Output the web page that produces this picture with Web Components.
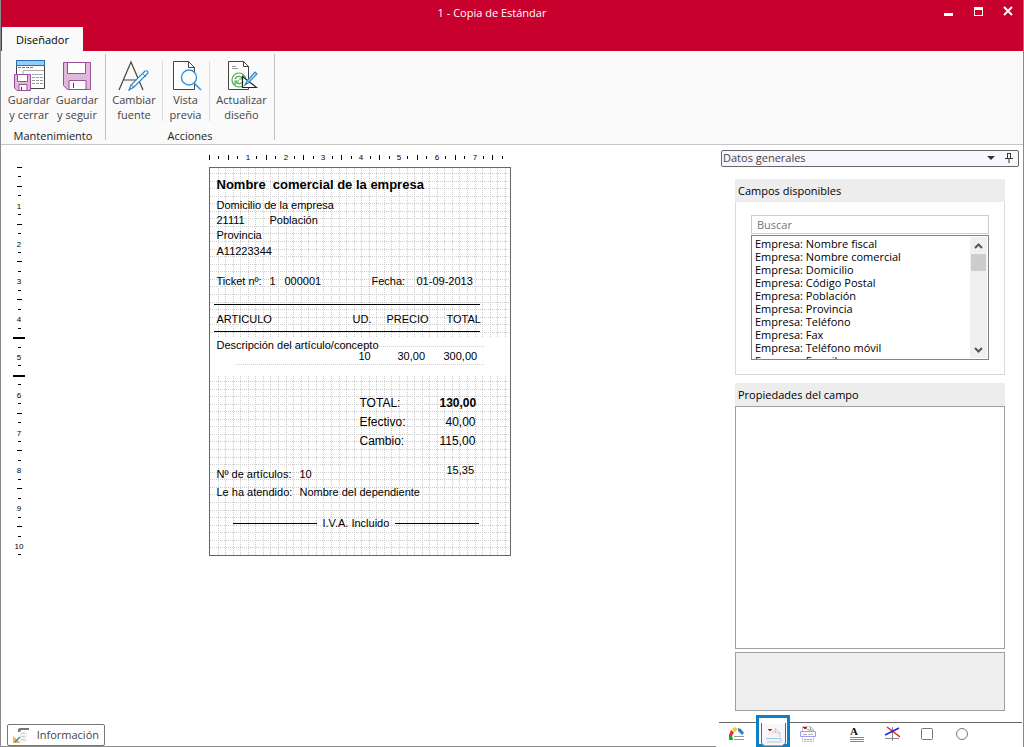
<!DOCTYPE html>
<html lang="es">
<head>
<meta charset="utf-8">
<title>1 - Copia de Estándar</title>
<style>
  html, body { margin: 0; height: 100%; }
  body { font: 11px/15px "Open Sans", "Noto Sans", sans-serif; color: #1e1e1e; background: #fff; }
</style>
</head>
<body>
<designer-window></designer-window>

<template id="tpl-window">
  <style>
    :host { display: flex; flex-direction: column; min-height: 100vh; box-sizing: border-box; border-left: 1px solid #8a8a8a; border-right: 1px solid #8a8a8a; background: #fff; }
    main { flex: 1; display: grid; grid-template-columns: minmax(0, 1fr) 305px; }
    .left { display: flex; flex-direction: column; border-bottom: 1px solid #8a8a8a; margin-right: 2px; }
    design-surface { flex: 1; }
  </style>
  <title-bar>1 - Copia de Estándar</title-bar>
  <ribbon-bar></ribbon-bar>
  <main>
    <div class="left">
      <design-surface></design-surface>
      <status-strip></status-strip>
    </div>
    <side-panel></side-panel>
  </main>
</template>

<template id="tpl-title">
  <style>
    :host { display: grid; grid-template-columns: 1fr auto 1fr; height: 51px; background: #c8002d; color: #fff; }
    .name { grid-column: 2; padding-top: 5px; margin-right: 40px; }
    .buttons { grid-column: 3; display: flex; justify-content: flex-end; align-items: flex-start; }
    .tab { grid-column: 1; grid-row: 1; align-self: end; justify-self: start; height: 24px; width: 81px; border: 0; padding: 0; margin-left: 1px; background: #fafafa; font: inherit; color: #000; }
    .buttons button { border: 0; background: none; padding: 0; width: 30px; height: 20px; }
    svg { display: block; margin: 4px auto 0; }
  </style>
  <button class="tab" type="button">Diseñador</button>
  <div class="name"><slot></slot></div>
  <div class="buttons">
    <button type="button" aria-label="Minimizar"><svg width="12" height="12"><path d="M2 7h9v3H2z" fill="#fff"/></svg></button>
    <button type="button" aria-label="Maximizar"><svg width="12" height="12"><path d="M2 1h9v9H2zM3 4v5h7V4z" fill="#fff" fill-rule="evenodd"/></svg></button>
    <button type="button" aria-label="Cerrar"><svg width="12" height="12"><path d="M2 1l8 8M10 1l-8 8" stroke="#fff" stroke-width="2"/></svg></button>
  </div>
</template>

<template id="tpl-ribbon">
  <style>
    :host { display: flex; height: 93px; background: #fafafa; border-bottom: 1px solid #c6c6c6; }
    ribbon-group:first-of-type { width: 105px; }
    ribbon-group:last-of-type { width: 169px; }
    i { width: 1px; margin-top: 6px; height: 60px; background: #dcdcdc; }
  </style>
  <ribbon-group label="Mantenimiento">
    <ribbon-button line1="Guardar" line2="y cerrar" size="48"><svg width="32" height="32" fill="none">
      <path d="M3.500 1.500h28v28h-28z" fill="#fff" stroke="#444"/><path d="M3.500 1.500h28v5h-28z" fill="#9acbf0" stroke="#1f72b8"/>
      <path d="M5 8.500h3m1 0h3m1 0h3m1 0h3" stroke="#777"/><path d="M10 11.500h21M10 12v4M19 15.500h11" stroke="#aaa"/><path d="M19 18.500h3m1 0h3m1 0h3M19 21.500h3m1 0h3m1 0h3M19 24.500h3m1 0h3m1 0h3" stroke="#999"/>
      <path d="M1.500 15.500h16v16H4l-2.500-2.500z" fill="#deb9dc" stroke="#9b4f96"/><path d="M4.500 15.500h10v7h-10zM6 31v-5.500h8V31" fill="#fff" stroke="#9b4f96"/><path d="M8.500 28v3" stroke="#444"/></svg></ribbon-button>
    <ribbon-button line1="Guardar" line2="y seguir" size="48"><svg width="32" height="32" fill="none">
      <path d="M2.500 3.500h27v27H6.500l-4-4z" fill="#deb9dc" stroke="#9b4f96"/><path d="M6.500 3.500h18v11h-18zM8 30v-8.500h17V30" fill="#fff" stroke="#9b4f96"/><path d="M12.500 24v5" stroke="#444"/></svg></ribbon-button>
  </ribbon-group>
  <ribbon-group label="Acciones">
    <ribbon-button line1="Cambiar" line2="fuente" size="55"><svg width="32" height="32" fill="none">
      <path d="M1 31L13 3L25 31M6 21h14" stroke="#444" stroke-width="1.200"/><path d="M11 31l2-5L27 12q3-1 3 2L16 28z" fill="#fff" stroke="#2d88cb" stroke-width="1.200"/><path d="M24 14l4 4M13 26l3 2" stroke="#2d88cb"/></svg></ribbon-button><i></i>
    <ribbon-button line1="Vista" line2="previa" size="46"><svg width="32" height="32" fill="none">
      <path d="M3.500 2.500h15l6 6v22h-21z" fill="#fff" stroke="#444"/><path d="M18.500 2.500v6h6z" stroke="#444"/><circle cx="19" cy="18.500" r="7.500" fill="#fff" stroke="#3595d8" stroke-width="1.400"/><path d="M24 24l7 7" stroke="#3595d8" stroke-width="1.600"/></svg></ribbon-button><i></i>
    <ribbon-button line1="Actualizar" line2="diseño" size="64"><svg width="32" height="32" fill="none">
      <path d="M2.500 2.500h15l5 5v23h-20z" fill="#fff" stroke="#444"/><path d="M17.500 2.500v5h5z" stroke="#444"/><path d="M6 7.500h4M6 9.500h6" stroke="#999"/>
      <circle cx="13" cy="21" r="8" fill="#fff"/><circle cx="13" cy="21" r="7" stroke="#45ad43" stroke-width="1.200"/><path d="M9 20a4 4 0 0 1 7-1M17 22a4 4 0 0 1-7 1" stroke="#45ad43" stroke-width="1.400"/><path d="M17 16v4h-4M9 26v-4h4" stroke="#45ad43" stroke-width="1.200"/>
      <path d="M16.500 17.500v11h14z" fill="#fff" stroke="#222" stroke-width="1.200"/><path d="M19 26l2-4 8-9 2 2-9 9z" fill="#bfe0f7" stroke="#2d88cb" stroke-width="1.200"/></svg></ribbon-button>
  </ribbon-group>
</template>

<template id="tpl-group">
  <style>
    :host { display: flex; flex-direction: column; box-sizing: border-box; border-right: 1px solid #c6c6c6; border-image: linear-gradient(transparent 4px, #c0c0c0 4px, #c0c0c0 88px, transparent 88px) 1; }
    .row { display: flex; justify-content: center; padding-top: 4px; height: 77px; box-sizing: border-box; }
    .label { text-align: center; color: #222; }
  </style>
  <div class="row"><slot></slot></div>
  <div class="label"></div>
</template>

<template id="tpl-rbutton">
  <style>
    :host { display: block; }
    button { width: 100%; border: 0; padding: 4px 0 0; background: none; font: inherit; color: #444; display: flex; flex-direction: column; align-items: center; white-space: nowrap; }
    ::slotted(svg) { display: block; margin-bottom: 1px; }
  </style>
  <button type="button"><slot></slot><span class="a"></span><span class="b"></span></button>
</template>

<template id="tpl-surface">
  <style>
    :host { display: grid; grid-template-columns: 32px 1fr 30px; grid-template-rows: 22px 1fr; align-items: start; }
    .h { grid-column: 2; justify-self: center; }
    .v { grid-column: 1; grid-row: 2; margin-top: -5px; }
    ticket-page { grid-column: 2; grid-row: 2; justify-self: center; }
  </style>
  <ruler-scale class="h" axis="x"></ruler-scale>
  <ruler-scale class="v" axis="y"></ruler-scale>
  <ticket-page></ticket-page>
</template>

<template id="tpl-page">
  <style>
    :host { display: block; position: relative; box-sizing: border-box; width: 302px; height: 389px; border: 1px solid #666; background: #fff; color: #000; font-family: "Liberation Sans", Arial, sans-serif; }
    svg, span { position: absolute; }
    svg { inset: 0; }
    span { white-space: pre; }
    .t { font-size: 13px; font-weight: bold; }
    .m { font-size: 12px; }
    .b { font-weight: bold; }
  </style>
  <svg width="300" height="387" aria-hidden="true"></svg>
</template>

<template id="tpl-status">
  <style>
    :host { display: flex; padding: 0 6px; }
    button { display: flex; align-items: center; gap: 8px; height: 22px; width: 98px; padding: 0 5px 1px; border: 1px solid #777; border-radius: 2px; background: #fff; font: inherit; color: #444; }
  </style>
  <button type="button"><svg width="16" height="16" fill="none"><path d="M5 2l2-1h9v2H8L7 5v10h7V5" fill="#f3f3f3" stroke="none"/><path d="M5 4V2l2-1h9v2H8L7 5H5z" fill="#777"/><path d="M8 6.500h4M8 9.500h4M8 12.500h4" stroke="#ccc"/><path d="M0 9l8 7H0z" fill="#f0b653"/><path d="M2 15l5-5" stroke="#3689c7" stroke-width="1.500"/></svg>Información</button>
</template>

<template id="tpl-side">
  <style>
    :host { display: flex; flex-direction: column; }
    .dock { margin: 5px 4px 0 3px; box-sizing: border-box; height: 17px; border: 1px solid #666; border-radius: 2px; background: #f7f6fc; display: flex; align-items: flex-start; color: #444; padding-left: 1px; }
    .dock span { flex: 1; line-height: 14px; }
    .dock button { border: 0; padding: 0; background: none; width: 18px; height: 13px; display: flex; align-items: center; justify-content: center; }
    section { margin: 12px 18px 0 17px; display: flex; flex-direction: column; }
    section + section { margin-top: 8px; flex: 1; }
    h2 { margin: 0; font: inherit; line-height: 23px; height: 23px; background: #ededed; padding-left: 3px; color: #000; }
    .body { border: 1px solid #d9d9d9; border-top: 0; padding: 13px 15px 14px; display: flex; flex-direction: column; gap: 1px; }
    input { box-sizing: border-box; width: 100%; height: 19px; border: 1px solid #ccc; border-radius: 0; padding: 0 5px 1px; font: inherit; outline: 0; background: #fff; }
    input::placeholder { color: #767676; opacity: 1; }
    .list { display: flex; box-sizing: border-box; height: 125px; border: 1px solid #7d838c; padding: 0 1px; }
    select { flex: 1; min-width: 0; border: 0; padding: 0; margin: 0; background: #fff; font: inherit; color: #000; scrollbar-width: none; overflow: hidden; outline: 0; border-radius: 0; height: 123px; }
    option { padding: 0 2px; height: 13px; min-height: 13px; line-height: 13px; font-size: 11px; }
    .bar { width: 17px; margin: 1px 0; background: #f0f0f0; display: flex; flex-direction: column; }
    .bar button { border: 0; padding: 0; height: 17px; background: none; display: flex; align-items: center; justify-content: center; }
    .thumb { height: 17px; background: #cdcdcd; margin: 0 1px; }
    .space { flex: 1; }
    .props { flex: 1; border: 1px solid #a0a0a0; }
    .desc { height: 57px; margin: 3px 0 11px; border: 1px solid #a0a0a0; background: #efefef; }
    nav { display: flex; border-top: 1px solid #666; height: 24px; margin: 0 1px; }
    nav button { border: 0; padding: 0 0 2px; background: none; width: 35px; height: 24px; box-sizing: border-box; display: flex; justify-content: center; align-items: center; }
    nav button.on { position: relative; width: 36px; padding: 0; }
    nav .on::before { content: ""; position: absolute; left: 2px; right: 0; top: -8px; height: 26px; border: 3px solid #0b80c4; background: #fff; }
    nav .on svg { position: relative; margin-left: 2px; }
    nav .gap { margin-left: 14px; }
  </style>
  <div class="dock"><span>Datos generales</span>
    <button type="button" aria-label="Menú"><svg width="8" height="4"><path d="M0 0h8L4 4z" fill="#333"/></svg></button>
    <button type="button" aria-label="Fijar panel"><svg width="8" height="11" fill="none"><path d="M2.500 1v5M2 1.500h4M0 6.500h8M4 7v4" stroke="#333"/><path d="M5 1h1v5H5z" fill="#333"/></svg></button>
  </div>
  <section>
    <h2>Campos disponibles</h2>
    <div class="body">
      <input type="text" placeholder="Buscar" aria-label="Buscar">
      <div class="list">
        <select size="9" aria-label="Campos disponibles">
          <option>Empresa: Nombre fiscal</option><option>Empresa: Nombre comercial</option><option>Empresa: Domicilio</option><option>Empresa: Código Postal</option><option>Empresa: Población</option><option>Empresa: Provincia</option><option>Empresa: Teléfono</option><option>Empresa: Fax</option><option>Empresa: Teléfono móvil</option><option>Empresa: E-mail</option>
        </select>
        <div class="bar">
          <button type="button" aria-label="Subir"><svg width="9" height="6" fill="none"><path d="M1 5l3.500-3.500L8 5" stroke="#555" stroke-width="2"/></svg></button>
          <div class="thumb"></div><div class="space"></div>
          <button type="button" aria-label="Bajar"><svg width="9" height="6" fill="none"><path d="M1 1l3.500 3.500L8 1" stroke="#555" stroke-width="2"/></svg></button>
        </div>
      </div>
    </div>
  </section>
  <section>
    <h2>Propiedades del campo</h2>
    <div class="props"></div>
    <div class="desc"></div>
  </section>
  <nav>
    <button type="button" aria-label="Datos"><svg width="17" height="16" fill="none"><path d="M1 9h3l1 5H1z" fill="#12b012"/><path d="M1 9l2-5 3 2-2 4z" fill="#e5332a"/><path d="M4 3l3-2 3 2-3 3z" fill="#edcf20"/><path d="M10 2l3 1 3 4-2 2-4-4z" fill="#2f7fd0"/><path d="M6 10.500h10M6 13.500h10" stroke="#999"/></svg></button>
    <button type="button" class="on" aria-label="Página"><svg width="28" height="24" fill="none"><path d="M2 1h24v19l-3 3H5l-3-3z" fill="#f7f6fc"/><path d="M2.500 0v20l3 3h18l3-3V0" stroke="#666"/><path d="M9 5h8l4 4v9H9z" fill="#f4f4f4"/><path d="M16 5.500l5 4.500v4M16.500 5v5H21M13 9h3" stroke="#ccc"/><path d="M9 6h4v1h-1v1h-2V7H9z" fill="#e21c1c"/><path d="M7 15.500h15v4" stroke="#9ccbf0"/><path d="M8 19h13" stroke="#ddd" stroke-width="2"/></svg></button>
    <button type="button" aria-label="Secciones"><svg width="16" height="16" fill="none"><path d="M2.500.5h8l3 3v12h-11z" fill="#fff" stroke="#ccc"/><path d="M10.500 1v3h3M8 3l2 2M6 2l2 2" stroke="#999"/><path d="M3 1h4v1H6v1H4V2H3z" fill="#e00"/><path d="M.5 5.500h15v5H.5z" fill="#f8f8ff" stroke="#9c9cf4"/><path d="M3 8.500h4m1 0h5" stroke="#bbb"/><path d="M4 13.500h2m1 0h2m1 0h2" stroke="#9090f4"/></svg></button>
    <button type="button" class="gap" aria-label="Texto"><svg width="16" height="18"><text x="1" y="10" font-family="Liberation Serif, serif" font-weight="bold" font-size="11" fill="#111">A</text><path d="M1 12h14v1H1zM1 14h14v1H1zM1 16h14v1H1z" fill="#888"/></svg></button>
    <button type="button" aria-label="Línea"><svg width="16" height="16" fill="none"><path d="M8.500 1v14M1 12.500h14" stroke="#888"/><path d="M3 1l13 10" stroke="#e3242b" stroke-width="1.500"/><path d="M1 9l14-7" stroke="#2424e3" stroke-width="1.500"/></svg></button>
    <button type="button" aria-label="Rectángulo"><svg width="14" height="14" fill="none"><rect x="1.500" y="1.500" width="11" height="11" rx="1" stroke="#777"/></svg></button>
    <button type="button" aria-label="Elipse"><svg width="14" height="14" fill="none"><circle cx="7" cy="7" r="5.500" stroke="#777"/></svg></button>
  </nav>
</template>

<script>
  const CM = 96 / 2.54;

  function attach(host, id) {
    const root = host.attachShadow({ mode: "open" });
    root.append(document.getElementById(id).content.cloneNode(true));
    return root;
  }
  function simple(name, id) {
    customElements.define(name, class extends HTMLElement {
      constructor() { super(); attach(this, id); }
    });
  }

  customElements.define("ribbon-button", class extends HTMLElement {
    connectedCallback() {
      if (this.shadowRoot) return;
      const root = attach(this, "tpl-rbutton");
      root.querySelector(".a").textContent = this.getAttribute("line1");
      root.querySelector(".b").textContent = this.getAttribute("line2");
      this.style.width = this.getAttribute("size") + "px";
    }
  });

  customElements.define("ribbon-group", class extends HTMLElement {
    connectedCallback() {
      if (this.shadowRoot) return;
      attach(this, "tpl-group").querySelector(".label").textContent = this.getAttribute("label");
    }
  });

  // Centimetre scale with quarter marks; section edges are thick on the vertical one.
  customElements.define("ruler-scale", class extends HTMLElement {
    connectedCallback() {
      if (this.shadowRoot) return;
      const root = this.attachShadow({ mode: "open" });
      const horizontal = this.getAttribute("axis") === "x";
      const last = horizontal ? 31 : 41;
      const edges = horizontal ? [] : [18, 22];
      let out = "";
      for (let q = 0; q <= last; q++) {
        const p = Math.round(q * CM / 4) + (horizontal ? 0 : 5);
        if (q && q % 4 === 0) {
          out += horizontal ? `<text x="${p + 1}" y="15">${q / 4}</text>` : `<text x="18" y="${p + 4}">${q / 4}</text>`;
        } else if (edges.includes(q)) {
          out += `<rect x="12" y="${p}" width="12" height="2"/>`;
        } else {
          const n = q % 2 ? 3 : 5;
          const o = q % 2 ? 1 : 0;
          out += horizontal ? `<rect x="${p}" y="${10 + o}" width="1" height="${n}"/>` : `<rect x="${16 + o}" y="${p}" width="${n}" height="1"/>`;
        }
      }
      root.innerHTML = `<style>:host { display: block; } svg { display: block; } text { font: 8px "Liberation Sans", Arial, sans-serif; text-anchor: middle; }</style>
        <svg width="${horizontal ? 302 : 30}" height="${horizontal ? 22 : 400}">${out}</svg>`;
    }
  });

  // Ticket fields as placed on the page: [x, y, text, style]
  const FIELDS = [
    [7, 9, "Nombre  comercial de la empresa", "t"],
    [7, 30, "Domicilio de la empresa"], [7, 45, "21111"], [60, 45, "Población"],
    [7, 60, "Provincia"], [7, 76, "A11223344"],
    [7, 106, "Ticket nº:"], [60, 106, "1"], [75, 106, "000001"], [162, 106, "Fecha:"], [207, 106, "01-09-2013"],
    [7, 144, "ARTICULO"], [143, 144, "UD."], [177, 144, "PRECIO"], [237, 144, "TOTAL"],
    [7, 170, "Descripción del artículo/concepto"], [149, 181, "10"], [188, 181, "30,00"], [234, 181, "300,00"],
    [150, 228, "TOTAL:", "m"], [230, 228, "130,00", "m b"],
    [150, 247, "Efectivo:", "m"], [236, 247, "40,00", "m"],
    [150, 266, "Cambio:", "m"], [230, 266, "115,00", "m"],
    [237, 295, "15,35"], [7, 299, "Nº de artículos:"], [90, 299, "10"],
    [7, 317, "Le ha atendido:"], [90, 317, "Nombre del dependiente"],
    [113, 348, "I.V.A. Incluido"]
  ];

  customElements.define("ticket-page", class extends HTMLElement {
    constructor() {
      super();
      const root = attach(this, "tpl-page");
      const step = CM / 5;
      const grid = (top, bottom) => {
        let d = "";
        for (let i = 1; i * step < 300; i++) d += `M${Math.round(i * step)}.5 ${top}V${bottom}`;
        for (let i = 0; top + 5 + i * step < bottom; i++) d += `M0 ${top + 5 + Math.round(i * step)}.5H300`;
        return d;
      };
      root.querySelector("svg").innerHTML =
        `<path d="${grid(0, 170)}M75 178.500H275M25 196.500H275${grid(208, 387)}" fill="none" stroke="#cecece" stroke-dasharray="1 1"/>
         <path d="M4 136h266v1H4zM4 163h266v1H4zM23 355h84v1H23zM185 355h84v1H185z"/>`;
      for (const [x, y, text, cls] of FIELDS) {
        const el = document.createElement("span");
        el.style.left = x + "px";
        el.style.top = y + "px";
        el.textContent = text;
        if (cls) el.className = cls;
        root.append(el);
      }
    }
  });

  simple("title-bar", "tpl-title");
  simple("ribbon-bar", "tpl-ribbon");
  simple("design-surface", "tpl-surface");
  simple("status-strip", "tpl-status");
  simple("side-panel", "tpl-side");
  simple("designer-window", "tpl-window");
</script>
</body>
</html>
